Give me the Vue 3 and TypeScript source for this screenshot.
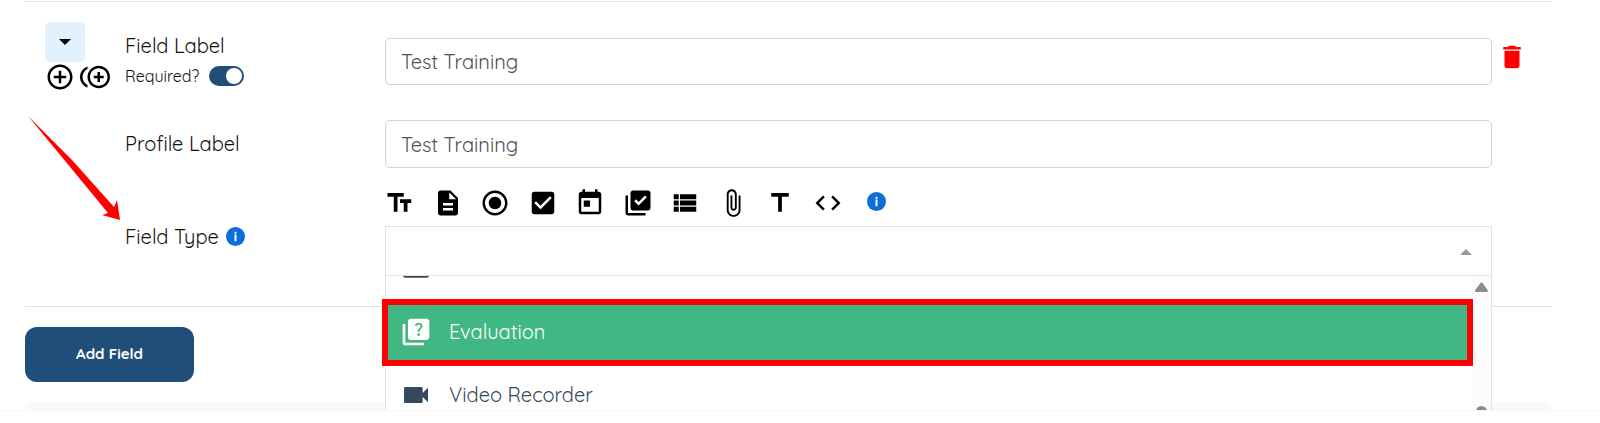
<script setup lang="ts">
import { ref } from 'vue'

interface FieldKind {
  name: string
  path: string
}

const fieldLabel = ref('Test Training')
const profileLabel = ref('Test Training')
const required = ref(true)
const search = ref('')

const kinds: FieldKind[] = [
  { name: 'Text', path: 'M2 4v3h5v12h3V7h5V4H2zm19 5h-9v3h3v7h3v-7h3V9z' },
  { name: 'Paragraph', path: 'M14 2H6c-1.1 0-1.99.9-1.99 2L4 20c0 1.1.89 2 1.99 2H18c1.1 0 2-.9 2-2V8l-6-6zm2 16H8v-2h8v2zm0-4H8v-2h8v2zm-3-5V3.500L18.500 9H13z' },
  { name: 'Radio', path: 'M12 7c-2.760 0-5 2.240-5 5s2.240 5 5 5 5-2.240 5-5-2.240-5-5-5zm0-5C6.480 2 2 6.480 2 12s4.480 10 10 10 10-4.480 10-10S17.520 2 12 2zm0 18c-4.420 0-8-3.580-8-8s3.580-8 8-8 8 3.580 8 8-3.580 8-8 8z' },
  { name: 'Checkbox', path: 'M19 3H5c-1.110 0-2 .9-2 2v14c0 1.100.89 2 2 2h14c1.110 0 2-.9 2-2V5c0-1.100-.89-2-2-2zm-9 14l-5-5 1.410-1.410L10 14.170l7.590-7.590L19 8l-9 9z' },
  { name: 'Date', path: 'M19 3h-1V1h-2v2H8V1H6v2H5c-1.110 0-1.990.9-1.990 2L3 19c0 1.100.89 2 2 2h14c1.100 0 2-.9 2-2V5c0-1.100-.9-2-2-2zm0 16H5V8h14v11zM7 10h5v5H7z' },
  { name: 'Multiple choice', path: 'M20 2H8c-1.100 0-2 .9-2 2v12c0 1.100.9 2 2 2h12c1.100 0 2-.9 2-2V4c0-1.100-.9-2-2-2zm-7.530 12L9 10.500l1.400-1.410 2.070 2.080L17.600 6 19 7.410 12.470 14zM4 6H2v14c0 1.100.9 2 2 2h14v-2H4V6z' },
  { name: 'List', path: 'M3 14h4v-4H3v4zm0 5h4v-4H3v4zM3 9h4V5H3v4zm5 5h13v-4H8v4zm0 5h13v-4H8v4zM8 5v4h13V5H8z' },
  { name: 'Attachment', path: 'M16.500 6v11.500c0 2.210-1.790 4-4 4s-4-1.790-4-4V5c0-1.380 1.120-2.500 2.500-2.500s2.500 1.120 2.500 2.500v10.500c0 .55-.45 1-1 1s-1-.45-1-1V6H10v9.500c0 1.380 1.120 2.500 2.500 2.500s2.500-1.120 2.500-2.500V5c0-2.210-1.790-4-4-4S7 2.790 7 5v12.500c0 3.040 2.460 5.500 5.500 5.500s5.500-2.460 5.500-5.500V6h-1.500z' },
  { name: 'Title', path: 'M5 4v3h5.500v12h3V7H19V4z' },
  { name: 'Code', path: 'M9.400 16.600L4.800 12l4.600-4.600L8 6l-6 6 6 6 1.400-1.400zm5.200 0l4.600-4.600-4.600-4.600L16 6l6 6-6 6-1.400-1.400z' },
]
</script>

<template>
  <main class="page">
    <form class="builder" @submit.prevent>
      <section class="field">
        <div class="row first">
          <div class="tools">
            <button class="collapse" type="button" aria-label="Collapse field">
              <svg width="12" height="6" viewBox="0 0 12 6"><path d="M0 0h12L6 6z" /></svg>
            </button>
            <div class="adders">
              <button class="bare" type="button" aria-label="Add field below">
                <svg class="icon" viewBox="0 0 24 24"><path d="M13 7h-2v4H7v2h4v4h2v-4h4v-2h-4V7zm-1-5C6.480 2 2 6.480 2 12s4.480 10 10 10 10-4.480 10-10S17.520 2 12 2zm0 18c-4.410 0-8-3.590-8-8s3.590-8 8-8 8 3.590 8 8-3.590 8-8 8z" /></svg>
              </button>
              <button class="bare" type="button" aria-label="Duplicate field">
                <svg class="icon" viewBox="0 0 24 24"><path d="M16 8h-2v3h-3v2h3v3h2v-3h3v-2h-3V8zM2 12c0-2.790 1.640-5.200 4.010-6.320V3.520C2.520 4.760 0 8.090 0 12s2.520 7.240 6.010 8.480v-2.160C3.640 17.200 2 14.790 2 12zm13-9c-4.960 0-9 4.040-9 9s4.040 9 9 9 9-4.040 9-9-4.040-9-9-9zm0 16c-3.860 0-7-3.140-7-7s3.140-7 7-7 7 3.140 7 7-3.140 7-7 7z" /></svg>
              </button>
            </div>
          </div>
          <div class="names">
            <label class="label" for="field-label">Field Label</label>
            <label class="required">
              Required?
              <input v-model="required" class="switch" type="checkbox" role="switch" />
            </label>
          </div>
          <input id="field-label" v-model="fieldLabel" class="text" type="text" />
          <button class="bare delete" type="button" aria-label="Delete field">
            <svg class="icon" viewBox="0 0 24 24"><path d="M6 19c0 1.100.9 2 2 2h8c1.100 0 2-.9 2-2V7H6v12zM19 4h-3.500l-1-1h-5l-1 1H5v2h14V4z" /></svg>
          </button>
        </div>

        <div class="row second">
          <label class="label" for="profile-label">Profile Label</label>
          <input id="profile-label" v-model="profileLabel" class="text" type="text" />
        </div>

        <div class="row third">
          <div class="type-name">
            <label class="label" for="field-type">Field Type</label>
            <svg class="info" viewBox="0 0 20 20" aria-hidden="true">
              <circle cx="10" cy="10" r="10" />
              <path d="M9 5h2v2H9zM9 8h2v7H9z" />
            </svg>
          </div>
          <div class="type-control">
            <div class="kinds">
              <div class="kind-list">
                <button v-for="kind in kinds" :key="kind.name" class="bare" type="button" :aria-label="kind.name">
                  <svg class="icon" viewBox="0 0 24 24"><path :d="kind.path" /></svg>
                </button>
              </div>
              <svg class="info" viewBox="0 0 20 20" aria-hidden="true">
                <circle cx="10" cy="10" r="10" />
                <path d="M9 5h2v2H9zM9 8h2v7H9z" />
              </svg>
            </div>
            <div class="combo">
              <input
                id="field-type"
                v-model="search"
                class="combo-input"
                type="text"
                role="combobox"
                aria-expanded="true"
                aria-controls="type-options"
              />
              <svg class="combo-caret" width="12" height="6" viewBox="0 0 12 6"><path d="M0 6h12L6 0z" /></svg>
              <div class="menu">
                <ul id="type-options" class="options" role="listbox" aria-label="Field Type">
                  <li class="option cut" role="option" aria-selected="false" aria-label="Video">
                    <div class="option-body">
                      <svg class="option-icon" viewBox="0 0 24 24"><path d="M4 4h16c1.100 0 2 .9 2 2v10.500c0 1.100-.9 2-2 2H4c-1.100 0-2-.9-2-2V6c0-1.100.9-2 2-2z" /></svg>
                    </div>
                  </li>
                  <li class="option active" role="option" aria-selected="true">
                    <div class="option-body">
                      <svg class="option-icon" viewBox="0 0 24 24"><path d="M4 6H2v14c0 1.100.9 2 2 2h14v-2H4V6zM20 2H8c-1.100 0-2 .9-2 2v12c0 1.100.9 2 2 2h12c1.100 0 2-.9 2-2V4c0-1.100-.9-2-2-2zm-5.990 13c-.59 0-1.050-.47-1.050-1.050 0-.59.47-1.040 1.050-1.040.59 0 1.040.45 1.040 1.040-.01.58-.45 1.050-1.040 1.050zm2.500-6.170c-.63.93-1.230 1.210-1.560 1.810-.13.24-.18.4-.18 1.180h-1.520c0-.41-.06-1.080.26-1.650.41-.73 1.180-1.160 1.630-1.800.48-.68.21-1.940-1.140-1.940-.88 0-1.320.67-1.500 1.230l-1.370-.57C11.510 5.960 12.520 5 13.990 5c1.230 0 2.080.56 2.510 1.260.37.61.58 1.730.01 2.570z" /></svg>
                      <span>Evaluation</span>
                    </div>
                  </li>
                  <li class="option" role="option" aria-selected="false">
                    <div class="option-body">
                      <svg class="option-icon" viewBox="0 0 24 24"><path d="M17 10.500V7c0-.55-.45-1-1-1H4c-.55 0-1 .45-1 1v10c0 .55.45 1 1 1h12c.55 0 1-.45 1-1v-3.500l4 4v-11l-4 4z" /></svg>
                      <span>Video Recorder</span>
                    </div>
                  </li>
                </ul>
                <div class="scrollbar" aria-hidden="true">
                  <svg width="13" height="10" viewBox="0 0 13 10"><path d="M5.500 1q1-1.500 2 0L12.700 8q.7 2-1 2H1.300q-1.700 0-1-2z" /></svg>
                  <span class="thumb"></span>
                </div>
              </div>
              <div class="highlight" aria-hidden="true"></div>
            </div>
          </div>
        </div>
      </section>

      <button class="add" type="button">Add Field</button>
      <div class="panel"></div>
    </form>

    <svg class="arrow" width="96" height="108" viewBox="0 0 96 108" aria-hidden="true">
      <path d="M0 0L44 44L86 91L89 84L92 104L74 99L80 97L38 46z" />
    </svg>
  </main>
</template>

<style>
body {
  margin: 0;
  background: #fff;
}
</style>

<style scoped>
.page {
  position: relative;
  overflow: hidden;
  border-bottom: 1px solid #f6f6f7;
  background: #fff;
  color: #111;
  font-family: Quicksand, Lato, "Open Sans", sans-serif;
  font-size: 20px;
  font-weight: 400;
  line-height: 24px;
}

.page *,
.page {
  box-sizing: border-box;
}

button,
input {
  font: inherit;
  color: inherit;
}

svg {
  display: block;
  fill: currentColor;
}

.builder {
  padding: 1px 48px 0 25px;
}

.field {
  border-top: 1px solid #e0e0e0;
  border-bottom: 1px solid #e0e0e0;
  padding: 20px 0 30px 20px;
}

.row {
  display: grid;
  grid-template-columns: 80px 260px minmax(0, 1fr) 60px;
  align-items: start;
}

.first {
  height: 98px;
}

.second {
  align-items: center;
}

.second .label,
.type-name {
  grid-column: 2;
}

.third {
  padding-top: 20px;
}

.collapse {
  display: grid;
  place-items: center;
  width: 40px;
  height: 40px;
  padding: 0;
  border: 0;
  border-radius: 5px;
  background: #e3f1ff;
  color: #000;
}

.adders {
  display: flex;
  gap: 5px;
}

.bare {
  display: block;
  padding: 0;
  border: 0;
  background: none;
  color: #000;
}

.icon {
  width: 30px;
  height: 30px;
}

.names {
  display: grid;
  gap: 6px;
  padding-top: 12px;
}

.required {
  display: flex;
  align-items: center;
  gap: 10px;
  font-size: 16px;
  line-height: 24px;
}

.switch {
  appearance: none;
  width: 35px;
  height: 20px;
  margin: 0;
  padding: 2px;
  border-radius: 10px;
  background: #b5bcc4;
}

.switch::before {
  content: "";
  display: block;
  width: 16px;
  height: 16px;
  border-radius: 50%;
  background: #fff;
}

.switch:checked {
  background: #1f4e79;
}

.switch:checked::before {
  margin-left: auto;
}

.text {
  width: 100%;
  height: 48px;
  padding: 0 15px;
  border: 1px solid #ced4da;
  border-radius: 5px;
  background: #fff;
  color: #495057;
}

.first .text {
  height: 47px;
  margin-top: 16px;
}

.delete {
  margin: 20px 0 0 5px;
  color: #f00;
}

.type-name {
  display: flex;
  align-items: center;
  gap: 7px;
  padding-top: 37px;
}

.info {
  width: 19px;
  height: 19px;
  fill: #0d6edb;
}

.type-name .info {
  margin-bottom: 2px;
}

.info path {
  fill: #fff;
}

.kinds {
  display: flex;
  align-items: center;
  gap: 24px;
  height: 30px;
  margin-bottom: 8px;
}

.kinds .info {
  margin-bottom: 3px;
}

.kind-list {
  display: flex;
  justify-content: space-between;
  width: 458px;
}

.combo {
  position: relative;
}

.combo-input {
  display: block;
  width: 100%;
  height: 50px;
  padding: 0 48px 0 16px;
  border: 1px solid #e2e2e2;
  background: #fff;
}

.combo-caret {
  position: absolute;
  top: 23px;
  right: 20px;
  color: #999;
}

.menu {
  position: absolute;
  z-index: 1;
  top: 50px;
  left: 0;
  right: 0;
  display: flex;
  height: 134px;
  overflow: hidden;
  border: solid #e2e2e2;
  border-width: 0 1px;
  background: #fff;
}

.options {
  flex: 1;
  margin: 0;
  padding: 0;
  list-style: none;
  color: #35495e;
}

.option {
  display: flex;
  align-items: flex-end;
  height: 63px;
}

.cut {
  height: 24px;
  overflow: hidden;
}

.option-body {
  display: flex;
  align-items: center;
  gap: 17px;
  height: 63px;
  padding: 0 14px;
}

.option-icon {
  width: 32px;
  height: 32px;
}

.active {
  background: #41b883;
  color: #fff;
}

.scrollbar {
  display: flex;
  flex-direction: column;
  align-items: center;
  justify-content: space-between;
  width: 19px;
  height: 142px;
  padding-top: 6px;
  background: #fcfcfc;
  color: #8b8b8b;
}

.thumb {
  width: 11px;
  height: 12px;
  border-radius: 6px 6px 0 0;
  background: #8b8b8b;
}

.highlight {
  position: absolute;
  z-index: 2;
  top: 73px;
  left: -3px;
  right: 19px;
  height: 67px;
  border: 6px solid #f00;
}

.add {
  display: block;
  width: 169px;
  height: 55px;
  margin: 20px 0;
  padding: 0 0 2px;
  border: 0;
  border-radius: 12px;
  background: #1f4e79;
  color: #fff;
  font-size: 15px;
  font-weight: 700;
}

.panel {
  height: 8px;
  border-radius: 12px 12px 0 0;
  background: #f8f9fb;
}

.arrow {
  position: absolute;
  top: 116px;
  left: 28px;
  color: #f00;
}
</style>
